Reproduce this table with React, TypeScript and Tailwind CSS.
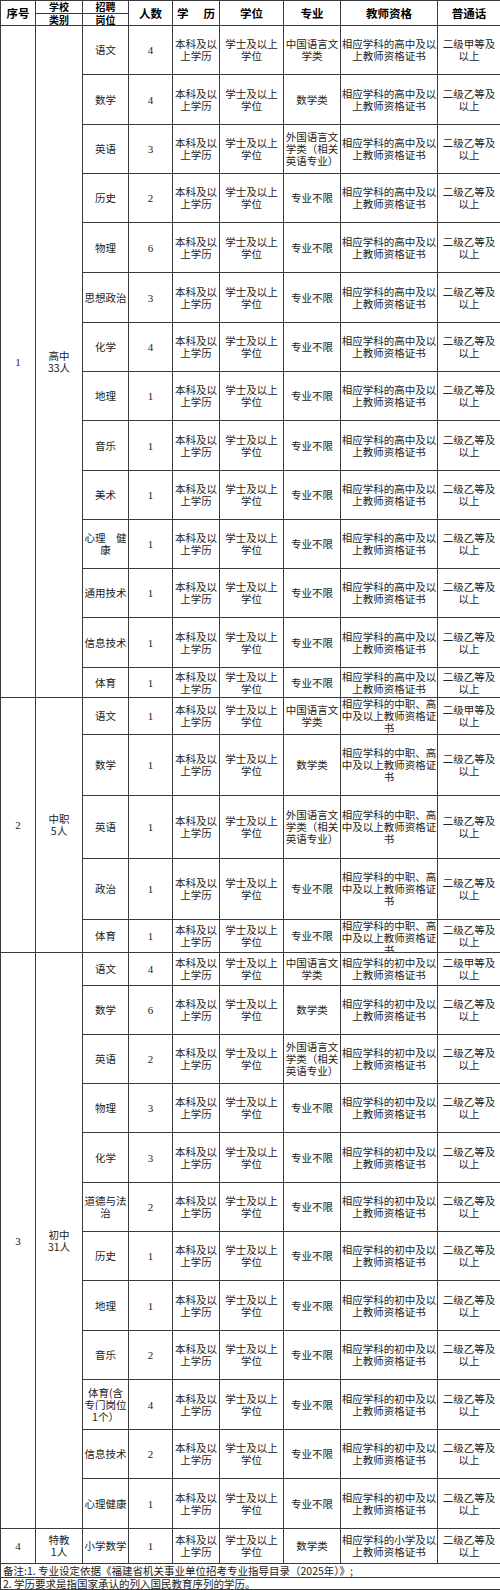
import React from "react";

type Post = {
  name: string;
  count: string;
  major: string;
  cert: string;
  mandarin: string;
  h: string;
};

type Section = {
  no: string;
  type: string;
  posts: Post[];
};

const DEG = "本科及以\n上学历";
const BACH = "学士及以上\n学位";
const ANY = "专业不限";
const CN = "中国语言文\n学类";
const EN = "外国语言文\n学类（相关\n英语专业）";
const MATH = "数学类";
const JIA = "二级甲等及\n以上";
const YI = "二级乙等及\n以上";
const GZ = "相应学科的高中及以\n上教师资格证书";
const ZZ = "相应学科的中职、高\n中及以上教师资格证\n书";
const CZ = "相应学科的初中及以\n上教师资格证书";
const XX = "相应学科的小学及以\n上教师资格证书";

const sections: Section[] = [
  {
    no: "1",
    type: "高中\n33人",
    posts: [
      { name: "语文", count: "4", major: CN, cert: GZ, mandarin: JIA, h: "h-[48px]" },
      { name: "数学", count: "4", major: MATH, cert: GZ, mandarin: YI, h: "h-[49px]" },
      { name: "英语", count: "3", major: EN, cert: GZ, mandarin: YI, h: "h-[48px]" },
      { name: "历史", count: "2", major: ANY, cert: GZ, mandarin: YI, h: "h-[48px]" },
      { name: "物理", count: "6", major: ANY, cert: GZ, mandarin: YI, h: "h-[49px]" },
      { name: "思想政治", count: "3", major: ANY, cert: GZ, mandarin: YI, h: "h-[49px]" },
      { name: "化学", count: "4", major: ANY, cert: GZ, mandarin: YI, h: "h-[48px]" },
      { name: "地理", count: "1", major: ANY, cert: GZ, mandarin: YI, h: "h-[48px]" },
      { name: "音乐", count: "1", major: ANY, cert: GZ, mandarin: YI, h: "h-[49px]" },
      { name: "美术", count: "1", major: ANY, cert: GZ, mandarin: YI, h: "h-[48px]" },
      { name: "心理　健\n康", count: "1", major: ANY, cert: GZ, mandarin: YI, h: "h-[48px]" },
      { name: "通用技术", count: "1", major: ANY, cert: GZ, mandarin: YI, h: "h-[48px]" },
      { name: "信息技术", count: "1", major: ANY, cert: GZ, mandarin: YI, h: "h-[49px]" },
      { name: "体育", count: "1", major: ANY, cert: GZ, mandarin: YI, h: "h-[29px]" },
    ],
  },
  {
    no: "2",
    type: "中职\n5人",
    posts: [
      { name: "语文", count: "1", major: CN, cert: ZZ, mandarin: JIA, h: "h-[36px]" },
      { name: "数学", count: "1", major: MATH, cert: ZZ, mandarin: YI, h: "h-[60px]" },
      { name: "英语", count: "1", major: EN, cert: ZZ, mandarin: YI, h: "h-[62px]" },
      { name: "政治", count: "1", major: ANY, cert: ZZ, mandarin: YI, h: "h-[60px]" },
      { name: "体育", count: "1", major: ANY, cert: ZZ, mandarin: YI, h: "h-[32px]" },
    ],
  },
  {
    no: "3",
    type: "初中\n31人",
    posts: [
      { name: "语文", count: "4", major: CN, cert: CZ, mandarin: JIA, h: "h-[32px]" },
      { name: "数学", count: "6", major: MATH, cert: CZ, mandarin: YI, h: "h-[48px]" },
      { name: "英语", count: "2", major: EN, cert: CZ, mandarin: YI, h: "h-[48px]" },
      { name: "物理", count: "3", major: ANY, cert: CZ, mandarin: YI, h: "h-[48px]" },
      { name: "化学", count: "3", major: ANY, cert: CZ, mandarin: YI, h: "h-[49px]" },
      { name: "道德与法\n治", count: "2", major: ANY, cert: CZ, mandarin: YI, h: "h-[48px]" },
      { name: "历史", count: "1", major: ANY, cert: CZ, mandarin: YI, h: "h-[48px]" },
      { name: "地理", count: "1", major: ANY, cert: CZ, mandarin: YI, h: "h-[49px]" },
      { name: "音乐", count: "2", major: ANY, cert: CZ, mandarin: YI, h: "h-[48px]" },
      { name: "体育(含\n专门岗位\n1个）", count: "4", major: ANY, cert: CZ, mandarin: YI, h: "h-[49px]" },
      { name: "信息技术", count: "2", major: ANY, cert: CZ, mandarin: YI, h: "h-[48px]" },
      { name: "心理健康", count: "1", major: ANY, cert: CZ, mandarin: YI, h: "h-[49px]" },
    ],
  },
  {
    no: "4",
    type: "特教\n1人",
    posts: [
      { name: "小学数学", count: "1", major: MATH, cert: XX, mandarin: YI, h: "h-[34px]" },
    ],
  },
];

const td = "border border-[#3a3a3a] p-0 text-center align-middle";

const Box = ({ h, text, num }: { h: string; text: string; num?: boolean }) => (
  <div className={`${h} flex flex-col overflow-hidden`}>
    <div
      className={`my-auto whitespace-pre ${
        num ? "font-['Liberation_Serif',serif] text-[11px]" : ""
      }`}
    >
      {text}
    </div>
  </div>
);

export default function App() {
  return (
    <div className="w-[500px] bg-white font-['Noto_Sans_CJK_SC',sans-serif] text-[10.5px] leading-[12px] text-[#222]">
      <table className="w-[500px] table-fixed border-collapse">
        <colgroup>
          <col className="w-[35px]" />
          <col className="w-[47px]" />
          <col className="w-[46px]" />
          <col className="w-[44px]" />
          <col className="w-[47px]" />
          <col className="w-[64px]" />
          <col className="w-[57px]" />
          <col className="w-[97px]" />
          <col className="w-[63px]" />
        </colgroup>
        <thead className="font-bold text-[11.5px] leading-[11px] text-black">
          <tr>
            <td rowSpan={2} className={td}>序号</td>
            <td className={td}>
              <div className="h-[12px] flex items-center justify-center text-[10px] leading-[10px]">学校</div>
            </td>
            <td className={td}>
              <div className="h-[12px] flex items-center justify-center text-[10px] leading-[10px]">招聘</div>
            </td>
            <td rowSpan={2} className={td}>人数</td>
            <td rowSpan={2} className={td}>
              <div className="flex justify-between px-[4px]">
                <span>学</span>
                <span>历</span>
              </div>
            </td>
            <td rowSpan={2} className={td}>学位</td>
            <td rowSpan={2} className={td}>专业</td>
            <td rowSpan={2} className={td}>教师资格</td>
            <td rowSpan={2} className={td}>普通话</td>
          </tr>
          <tr>
            <td className={td}>
              <div className="h-[11px] flex items-center justify-center text-[10px] leading-[10px]">类别</div>
            </td>
            <td className={td}>
              <div className="h-[11px] flex items-center justify-center text-[10px] leading-[10px]">岗位</div>
            </td>
          </tr>
        </thead>
        <tbody>
          {sections.map((s) =>
            s.posts.map((p, i) => (
              <tr key={s.no + i}>
                {i === 0 && (
                  <>
                    <td rowSpan={s.posts.length} className={`${td} font-['Liberation_Serif',serif] text-[11px]`}>
                      {s.no}
                    </td>
                    <td rowSpan={s.posts.length} className={`${td} whitespace-pre`}>
                      {s.type}
                    </td>
                  </>
                )}
                <td className={td}><Box h={p.h} text={p.name} /></td>
                <td className={td}><Box h={p.h} text={p.count} num /></td>
                <td className={td}><Box h={p.h} text={DEG} /></td>
                <td className={td}><Box h={p.h} text={BACH} /></td>
                <td className={td}><Box h={p.h} text={p.major} /></td>
                <td className={td}><Box h={p.h} text={p.cert} /></td>
                <td className={td}><Box h={p.h} text={p.mandarin} /></td>
              </tr>
            ))
          )}
          <tr>
            <td colSpan={9} className={`${td} text-left`}>
              <div className="h-[13px] flex items-center pl-[2px] whitespace-nowrap">
                备注:1. 专业设定依据《福建省机关事业单位招考专业指导目录（2025年）》;
              </div>
            </td>
          </tr>
          <tr>
            <td colSpan={9} className={`${td} text-left`}>
              <div className="h-[11px] flex items-center pl-[2px] whitespace-nowrap">
                2. 学历要求是指国家承认的列入国民教育序列的学历。
              </div>
            </td>
          </tr>
        </tbody>
      </table>
    </div>
  );
}
